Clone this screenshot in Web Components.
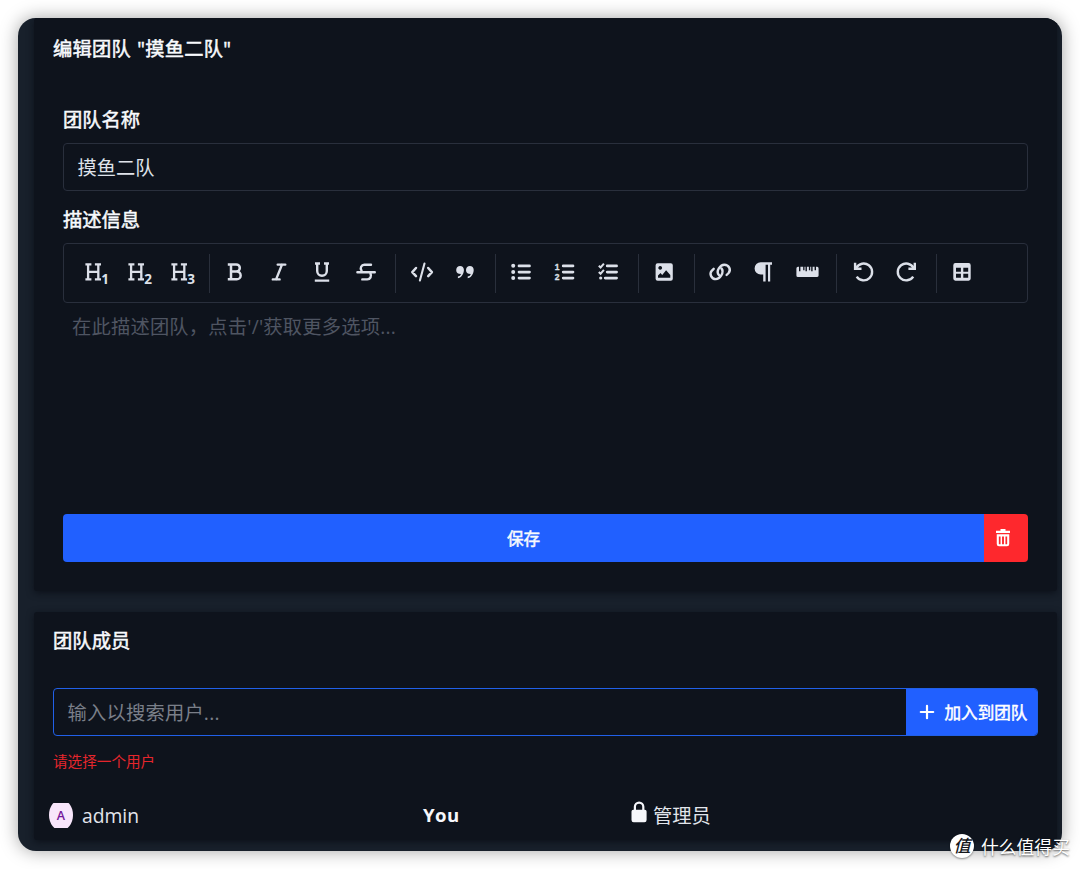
<!DOCTYPE html>
<html lang="zh-CN">
<head>
<meta charset="utf-8">
<title>编辑团队</title>
<style>
html,body{margin:0;height:100%;background:#fff;overflow:hidden}
body{font-family:"Open Sans","Noto Sans CJK SC",sans-serif;font-size:19.3px;color:#f8fafd;position:relative}
</style>
</head>
<body>
<app-window>
  <ui-card heading='编辑团队 "摸鱼二队"' style="height:573px;padding-top:1px;--gap:.22px">
    <team-form></team-form>
  </ui-card>
  <ui-card heading="团队成员" style="height:228px;--line:57px">
    <member-search></member-search>
    <member-row name="admin" note="You" role-name="管理员"></member-row>
  </ui-card>
</app-window>
<water-mark>什么值得买</water-mark>
<script>
const define = (tag, html) => customElements.define(tag, class extends HTMLElement {
  connectedCallback() {
    if (this.shadowRoot) return;
    const t = document.createElement('template');
    t.innerHTML = typeof html === 'function' ? html(this) : html;
    this.attachShadow({ mode: 'open' }).append(t.content.cloneNode(true));
  }
});
const attr = (el, n) => (el.getAttribute(n) || '').replace(/"/g, '&quot;');
const medium = 'font-weight:400;-webkit-text-stroke:.5px currentColor;';

define('app-window', `<style>
:host{display:flex;flex-direction:column;gap:21px;box-sizing:border-box;width:1044px;height:833px;margin:18px;padding:0 5px 0 16px;
background:#18202b;border-radius:18px;overflow:hidden;box-shadow:0 0 18px rgba(0,0,0,.36)}
</style><slot></slot>`);

define('ui-card', el => `<style>
:host{display:block;flex:none;box-sizing:border-box;background:#0e131c;border-radius:3px;box-shadow:0 2px 7px rgba(8,12,20,.75)}
h2{margin:0;padding:0 19px;height:59px;line-height:var(--line,59px);font-size:19.3px;${medium}white-space:pre;letter-spacing:var(--gap,.06px);word-spacing:1px}
</style><h2>${attr(el, 'heading')}</h2><slot></slot>`);

define('team-form', `<style>
:host{display:block;padding:25px 29px 0}
label{display:block;height:34px;line-height:34px;${medium}margin-bottom:6px}
label.second{margin-top:12px}
.input{box-sizing:border-box;height:48px;line-height:47px;border:1px solid #292f3c;border-radius:4px;padding:0 13.5px;color:#dfe3ea}
.hint{box-sizing:border-box;height:211px;padding:6px 9px;line-height:36px;color:#4f5562;letter-spacing:.19px}
.actions{display:flex;height:48px;border-radius:4px;overflow:hidden}
.save{flex:1;background:#2160ff;display:flex;align-items:center;justify-content:center;font-size:16.6px;${medium}}
.del{width:44px;background:#fe282d;display:grid;place-items:center}
.del tool-icon{position:relative;left:-3px}
</style>
<label>团队名称</label><div class="input">摸鱼二队</div>
<label class="second">描述信息</label>
<editor-toolbar></editor-toolbar>
<div class="hint">在此描述团队，点击'/'获取更多选项...</div>
<div class="actions"><div class="save">保存</div><div class="del"><tool-icon name="trash"></tool-icon></div></div>`);

const h = 'M-7.6-7.6h6M1.9-7.6h6.1M-7.6 7.4h6M1.9 7.4h6.1M-4.9-7.6v15M5.3-7.6v15M-4.9-.2h10.2';
const heading = n => `<path d="${h}" stroke-width="2.3"/><text x="8.3" y="12" font-size="13.5" font-weight="700">${n}</text>`;
const icons = {
  h1: heading(1), h2: heading(2), h3: heading(3),
  bold: '<path stroke-width="2.5" d="M-7.2-7.6h8.4a3.6 3.6 0 0 1 0 7.2H-4M-7.2 7.3h9a3.8 3.8 0 0 0 0-7.7M-4-7.6v14.9"/>',
  italic: '<path stroke-width="2.4" stroke-linecap="round" d="M-1.3-7.4h7.6M-6.2 7.4h6.8M3-7.4l-5.9 14.8"/>',
  underline: '<path stroke-width="2.4" d="M-7-8.5h5M2-8.5h5M-4.8-8.5v7.5a4.8 4.8 0 0 0 9.6 0v-7.5M-7.2 8.6H7.2"/>',
  strike: '<path stroke-width="2.4" stroke-linecap="round" d="M-8.6.2H8.8M5-7.3H-1.6a3.6 3.6 0 0 0-2.9 5.8M4.4 1.4c1.5 2.7-.1 6-3.1 6h-5"/>',
  code: '<path stroke-width="2.5" stroke-linejoin="round" stroke-linecap="round" d="M-6-4L-9.7.1l3.7 4M6.2-4L9.9.1l-3.7 4"/><path stroke-width="2.1" stroke-linecap="round" d="M2.5-8.4L-2.1 8.6"/>',
  quote: '<g class="f"><path d="M-5-6a4 4 0 0 0-1 7.8l2 .1Q-4.5 4-7.1 4.4v1.8C-2.4 5.7-1-.1-1.1-2.2A4 4 0 0 0-5-6z"/><path d="M4.8-6a4 4 0 0 0-1 7.8l2 .1Q5.3 4 2.7 4.4v1.8C7.4 5.7 8.8-.1 8.7-2.2A4 4 0 0 0 4.8-6z"/></g>',
  ul: '<path stroke-width="2.7" stroke-linecap="round" d="M-2-6.1H8.5M-2 .1H8.5M-2 6.1H8.5"/><g class="f"><circle cx="-7.8" cy="-6.2" r="2"/><circle cx="-7.8" cy="0" r="2"/><circle cx="-7.8" cy="6" r="2"/></g>',
  ol: '<path stroke-width="2.7" stroke-linecap="round" d="M-.8-6.1H9M-.8.1H9M-.8 6.1H9"/><text class="n" x="-9.3" y="-2">1</text><text class="n" x="-9.3" y="7.8">2</text>',
  check: '<path stroke-width="2.7" stroke-linecap="round" d="M-.8-6.1H8.6M-.8.1H8.6M-2.8 6.1H8.6"/><path stroke-width="2" d="M-9.2-6.2l1.8 1.7 3.3-3.9M-9.2 0l1.8 1.7L-4.1-2.1"/><circle class="f" cx="-7.3" cy="6" r="1.6"/>',
  image: '<path class="f" fill-rule="evenodd" d="M-6.4-8.8H6.8a2 2 0 0 1 2 2V6.8a2 2 0 0 1-2 2H-6.4a2 2 0 0 1-2-2V-6.8a2 2 0 0 1 2-2zM-6 5.8H6.3V3L2.1-1.8-1.8 3.1-3.5.9-6 3.6zM-3.8-6a1.9 1.9 0 1 0 .01 0z"/>',
  link: '<g stroke-width="2.4" stroke-linecap="round"><path d="M-1 3.2C-4.8-.8.6-7.3 4.3-7.3c4.6 0 7.1 5 4.3 8.3L6.6 3"/><path d="M1.4-3.6C4.9.5-.6 7.1-4.2 7.1-8.6 7-11 2-8.3-1.2l2-2"/></g>',
  para: '<path class="f" d="M-2.3-9.7H9v2.4H7.2V9.4H5V-7.3H2.6V9.4H.2V2.5h-2.5a6.1 6.1 0 0 1 0-12.2z"/>',
  ruler: '<path class="f" d="M-9-5.2h1v4.4h1.4v-4.4h2.8v3.4h1.3v-3.4h1V-.8h1.4v-4.4h2v3.4h1.3v-3.4h1V-.8h1.4v-4.4h2v3.4h1.4v-3.4h1.2a1.6 1.6 0 0 1 1.4 1.6V3.4A1.6 1.6 0 0 1 10.2 5H-9a1.6 1.6 0 0 1-1.6-1.6V-3.6A1.6 1.6 0 0 1-9-5.2z"/>',
  undo: '<g transform="translate(.7 0)"><path stroke-width="2.4" d="M-8.6-9.2v6h6.4"/><path stroke-width="2.4" d="M-7.4-4A8.4 8.4 0 1 1-7 4.6"/></g>',
  redo: '<path stroke-width="2.4" d="M8.8-9.2v6H2.4"/><path stroke-width="2.4" d="M7.6-4A8.4 8.4 0 1 0 7.2 4.6"/>',
  table: '<path class="f" fill-rule="evenodd" d="M-6.6-8.9H6.6a2.1 2.1 0 0 1 2.1 2.1V6.6a2.1 2.1 0 0 1-2.1 2.1H-6.6a2.1 2.1 0 0 1-2.1-2.1V-6.8a2.1 2.1 0 0 1 2.1-2.1zM-6-4.2v3.9h4.9v-3.9zM1.3-4.2v3.9h4.9v-3.9zM-6 1.8v3.9h4.9v-3.9zM1.3 1.8v3.9h4.9v-3.9z"/>',
  trash: '<g stroke="#fff"><path stroke-width="2.2" d="M-7-6.2H7M-2.5-8h5"/><path stroke-width="2.1" d="M-5.2-2.6v8.7q0 1.2 1.2 1.2h8q1.2 0 1.2-1.2v-8.7z"/><path stroke-width="1.5" d="M-1.7-3v10M1.7-3v10"/></g>',
  plus: '<path stroke="#fff" stroke-width="2.2" stroke-linecap="round" d="M-6.2 0H6.2M0-6.2V6.2"/>',
  lock: '<path class="f" style="fill:#f6f7fb" d="M-5.7-2.3H5.8A1.8 1.8 0 0 1 7.6-.5V8a2.2 2.2 0 0 1-2.2 2.2H-5.3A2.2 2.2 0 0 1-7.5 8V-.5A1.8 1.8 0 0 1-5.7-2.3z"/><path stroke="#f6f7fb" stroke-width="2.2" d="M-4.1-2V-5.2a4.2 4.2 0 0 1 8.4 0V-2"/>'
};
define('tool-icon', el => `<style>
:host{display:block;width:30px;height:28px}
svg{display:block;overflow:visible;fill:none;stroke:#dce0e9}
.f,text{fill:#dce0e9;stroke:none}
text{font-family:"Open Sans",sans-serif}
.n{font:bold 8.5px "Liberation Sans",sans-serif;stroke:#dce0e9;stroke-width:.3}
</style><svg width="30" height="28" viewBox="-15 -14 30 28">${icons[el.getAttribute('name')]}</svg>`);

const groups = ['h1 h2 h3', 'bold italic underline strike', 'code quote', 'ul ol check', 'image', 'link para ruler', 'undo redo', 'table'];
define('editor-toolbar', `<style>
:host{display:flex;align-items:center;box-sizing:border-box;height:60px;border:1px solid #292f3c;border-radius:4px;padding-left:7px}
.tool{width:43.36px;flex:none;display:grid;place-items:center;padding-bottom:2px}
hr{border:0;margin:0 3.5px 0 8.2px;width:1px;height:39px;flex:none;background:#292f3b}
</style>${groups.map(g => g.split(' ').map(n => `<div class="tool"><tool-icon name="${n}"></tool-icon></div>`).join('')).join('<hr>')}`);

define('member-search', `<style>
:host{display:block;padding:17px 19px 0}
.bar{display:flex;height:48px;box-sizing:border-box;border:1px solid #2160e8;border-radius:4px;overflow:hidden}
.in{flex:1;line-height:47px;padding-left:13.5px;color:#7a7f89;letter-spacing:.2px}
button{all:unset;width:131.5px;background:#2160ff;display:flex;align-items:center;font-size:16.6px;${medium}color:#fff}
tool-icon{margin:0 3px 0 6px}
p{margin:13px 0 0;height:24px;line-height:24px;font-size:14.6px;color:#e5262c}
</style><div class="bar"><div class="in">输入以搜索用户...</div><button><tool-icon name="plus"></tool-icon>加入到团队</button></div><p>请选择一个用户</p>`);

define('member-row', el => `<style>
:host{display:grid;grid-template-columns:374px 201px 1fr;align-items:center;height:40px;margin:22px 15px 0;color:#e2e5eb}
div{display:flex;align-items:center}
.av{display:flex;align-items:center;width:24px;height:25px;margin-right:9px;justify-content:center;background:#f8e6fb;color:#75169a;font-size:12.5px;font-weight:600;clip-path:ellipse(12px 15.5px at center)}
b{font-weight:700;color:#f6f7fb;font-size:18.6px;letter-spacing:.4px;position:relative;top:-1px}
tool-icon{position:relative;top:-3px;margin-right:-1px}
</style><div><span class="av">A</span>${attr(el, 'name')}</div><b>${attr(el, 'note')}</b><div><tool-icon name="lock"></tool-icon>${attr(el, 'role-name')}</div>`);

define('water-mark', `<style>
:host{position:absolute;left:950px;top:832px;display:flex;align-items:center;height:28px;white-space:nowrap;font-size:17.8px;color:#fff;text-shadow:0 1px 2px rgba(0,0,0,.65)}
i{width:24px;height:24px;line-height:23px;border-radius:50%;background:#fff;color:#15171c;text-align:center;font-size:17px;font-weight:500;text-shadow:none;margin-right:7px;box-shadow:0 1px 2px rgba(0,0,0,.4)}
</style><i>值</i><slot></slot>`);
</script>
</body>
</html>
